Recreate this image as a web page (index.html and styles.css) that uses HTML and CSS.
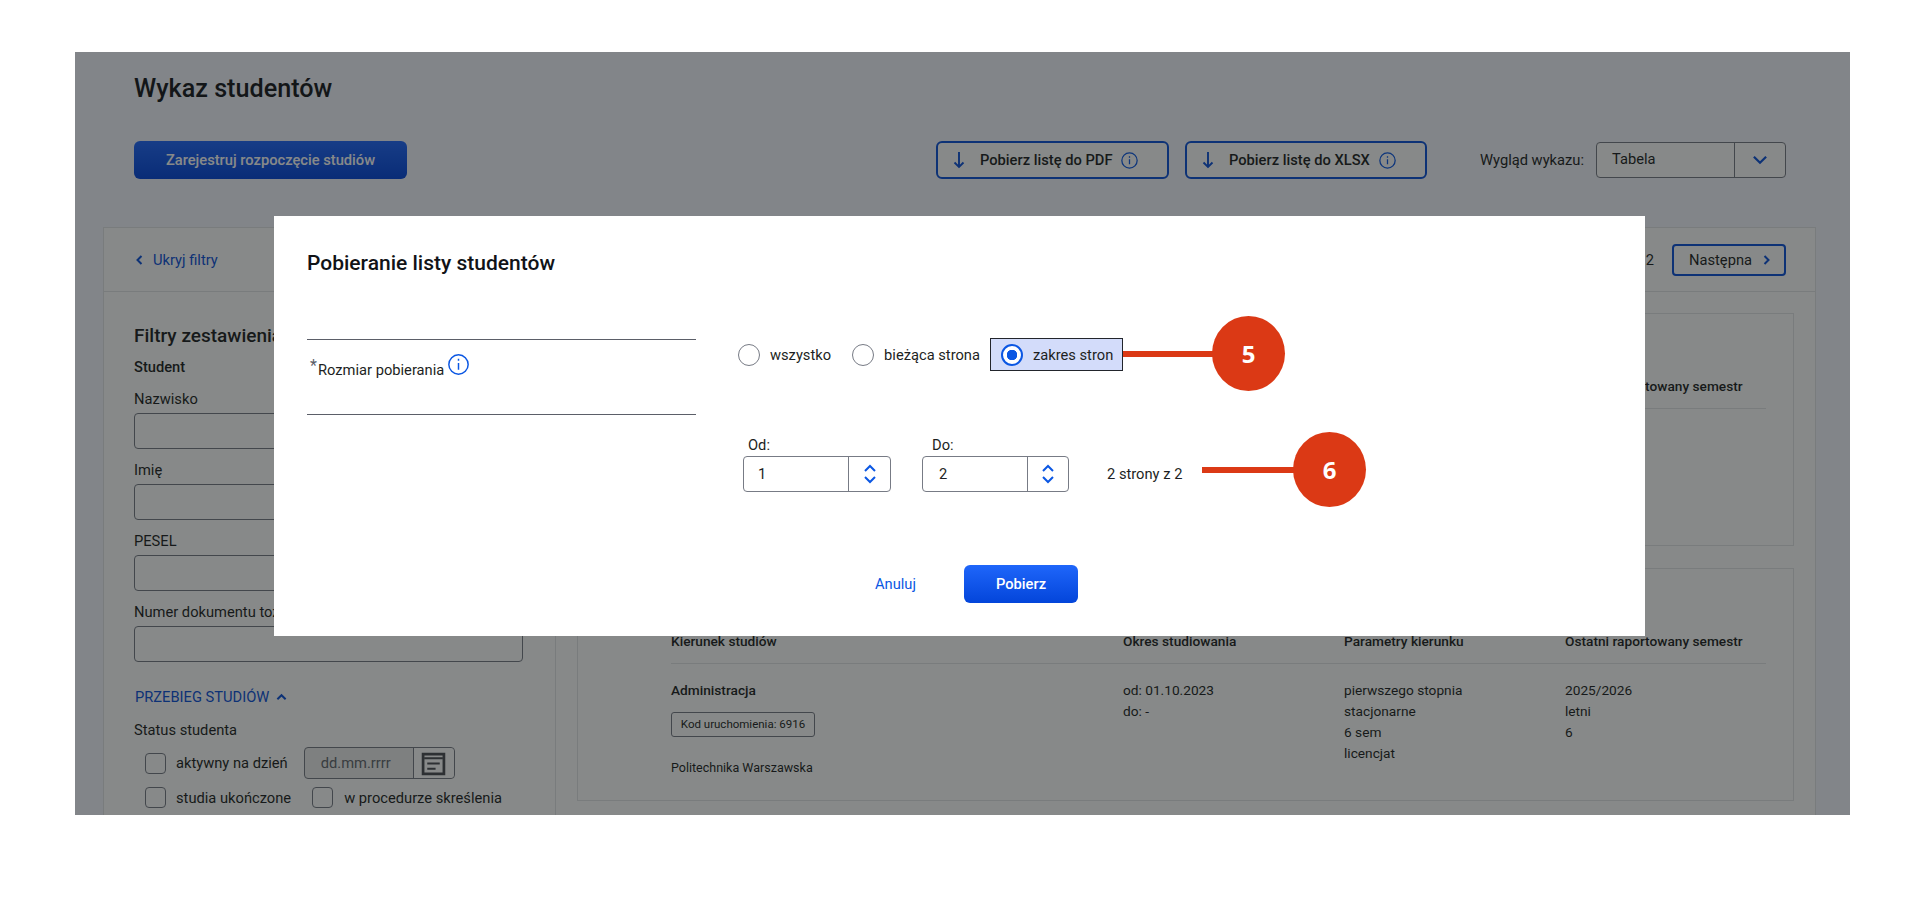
FILE: index.html
```html
<!DOCTYPE html>
<html lang="pl">
<head>
    <meta charset="UTF-8">
    <meta name="viewport" content="width=device-width, initial-scale=1.0">
    <title>Wykaz studentów</title>
    <link rel="stylesheet" href="styles.css">
</head>
<body>
    <div class="screen">
        <h1 class="page-title">Wykaz studentów</h1>

        <div class="toolbar">
            <button class="btn-primary btn-register">Zarejestruj rozpoczęcie studiów</button>
            <button class="btn-outline btn-pdf">
                <svg class="arrow-down" viewBox="0 0 14 18"><path d="M7 1v15M2.5 11.5 7 16l4.5-4.5"/></svg>
                <span>Pobierz listę do PDF</span>
                <svg class="info info-small" viewBox="0 0 20 20"><circle cx="10" cy="10" r="9"/><path d="M10 8.5v6M10 5v1.8"/></svg>
            </button>
            <button class="btn-outline btn-xlsx">
                <svg class="arrow-down" viewBox="0 0 14 18"><path d="M7 1v15M2.5 11.5 7 16l4.5-4.5"/></svg>
                <span>Pobierz listę do XLSX</span>
                <svg class="info info-small" viewBox="0 0 20 20"><circle cx="10" cy="10" r="9"/><path d="M10 8.5v6M10 5v1.8"/></svg>
            </button>
            <span class="view-label">Wygląd wykazu:</span>
            <div class="select">
                <span class="select-value">Tabela</span>
                <span class="select-arrow">
                    <svg viewBox="0 0 14 9"><path d="M1.5 1.5 7 7l5.5-5.5"/></svg>
                </span>
            </div>
        </div>

        <div class="panel">
            <div class="panel-head">
                <a class="hide-filters">
                    <svg viewBox="0 0 7 10"><path d="M5.5 1 1.5 5l4 4"/></svg>
                    Ukryj filtry
                </a>
                <div class="pager">
                    <span>2</span>
                    <button class="btn-next">
                        Następna
                        <svg viewBox="0 0 7 10"><path d="M1.5 1l4 4-4 4"/></svg>
                    </button>
                </div>
            </div>

            <div class="panel-body">
                <aside class="filters">
                    <h2>Filtry zestawienia</h2>
                    <h3>Student</h3>
                    <label class="field"><span>Nazwisko</span><input type="text"></label>
                    <label class="field"><span>Imię</span><input type="text"></label>
                    <label class="field"><span>PESEL</span><input type="text"></label>
                    <label class="field"><span>Numer dokumentu tożsamości</span><input type="text"></label>

                    <a class="section-toggle">
                        PRZEBIEG STUDIÓW
                        <svg viewBox="0 0 12 8"><path d="M1.5 6.5 6 2l4.5 4.5"/></svg>
                    </a>
                    <div class="status-label">Status studenta</div>
                    <div class="check-row check-row-date">
                        <span class="checkbox"></span>
                        <span>aktywny na dzień</span>
                        <div class="date-input">
                            <span class="date-value">dd.mm.rrrr</span>
                            <span class="date-btn">
                                <svg viewBox="0 0 24 24"><path class="cal-frame" d="M2 3h20v19H2z"/><path class="cal-lines" d="M3 7h18M6 12h12M6 17h8"/></svg>
                            </span>
                        </div>
                    </div>
                    <div class="check-row">
                        <span class="checkbox"></span>
                        <span>studia ukończone</span>
                        <span class="checkbox checkbox-second"></span>
                        <span>w procedurze skreślenia</span>
                    </div>
                </aside>

                <section class="cards">
                    <article class="card">
                        <div class="card-grid card-head">
                            <span>Kierunek studiów</span>
                            <span>Okres studiowania</span>
                            <span>Parametry kierunku</span>
                            <span>Ostatni raportowany semestr</span>
                        </div>
                    </article>
                    <article class="card">
                        <div class="card-grid card-head">
                            <span>Kierunek studiów</span>
                            <span>Okres studiowania</span>
                            <span>Parametry kierunku</span>
                            <span>Ostatni raportowany semestr</span>
                        </div>
                        <div class="card-grid card-row">
                            <div>
                                <strong>Administracja</strong>
                                <div class="badge">Kod uruchomienia: 6916</div>
                                <div class="school">Politechnika Warszawska</div>
                            </div>
                            <div>od: 01.10.2023<br>do: -</div>
                            <div>pierwszego stopnia<br>stacjonarne<br>6 sem<br>licencjat</div>
                            <div>2025/2026<br>letni<br>6</div>
                        </div>
                    </article>
                </section>
            </div>
        </div>

        <div class="overlay">
            <div class="modal">
                <h2 class="modal-title">Pobieranie listy studentów</h2>

                <div class="modal-form">
                    <div class="size-label">
                        <span class="star">*</span>
                        <span>Rozmiar pobierania</span>
                        <svg class="info info-big" viewBox="0 0 20 20"><circle cx="10" cy="10" r="9.2"/><path d="M10 8.5v6.5M10 4.6v1.9"/></svg>
                    </div>

                    <div class="size-options">
                        <div class="radios">
                            <span class="radio"></span>
                            <span class="radio-text">wszystko</span>
                            <span class="radio"></span>
                            <span class="radio-text">bieżąca strona</span>
                            <div class="radio-active">
                                <span class="radio radio-on"></span>
                                <span>zakres stron</span>
                            </div>
                        </div>

                        <div class="range">
                            <div class="spin-field spin-field-from">
                                <span class="spin-label">Od:</span>
                                <div class="spinner">
                                    <span class="spin-value">1</span>
                                    <span class="spin-btn">
                                        <svg viewBox="0 0 14 24"><path d="M2 9l5-5 5 5M2 15l5 5 5-5"/></svg>
                                    </span>
                                </div>
                            </div>
                            <div class="spin-field spin-field-to">
                                <span class="spin-label">Do:</span>
                                <div class="spinner">
                                    <span class="spin-value">2</span>
                                    <span class="spin-btn">
                                        <svg viewBox="0 0 14 24"><path d="M2 9l5-5 5 5M2 15l5 5 5-5"/></svg>
                                    </span>
                                </div>
                            </div>
                            <span class="range-info">2 strony z 2</span>
                        </div>
                    </div>
                </div>

                <div class="modal-actions">
                    <a class="cancel">Anuluj</a>
                    <button class="btn-primary btn-download">Pobierz</button>
                </div>

                <!-- Callouts drawn over the dialog -->
                <span class="callout-line callout-line-5"></span>
                <span class="callout-dot callout-dot-5">5</span>
                <span class="callout-line callout-line-6"></span>
                <span class="callout-dot callout-dot-6">6</span>
            </div>
        </div>
    </div>
</body>
</html>
```

FILE: styles.css
```css
* {
    box-sizing: border-box;
}

body {
    margin: 0;
    padding: 52px 68px 86px 75px;
    background-color: #fff;
    font-family: Roboto, "Liberation Sans", sans-serif;
    font-size: 14.7px;
    color: #1d1f23;
}

button {
    font-family: inherit;
    cursor: pointer;
}

/* The dimmed screenshot area */
.screen {
    position: relative;
    height: 763px;
    padding-top: 22px;
    overflow: hidden;
    background-color: #f4f6fe;
}

.page-title {
    margin: 0 0 37px 59px;
    font-size: 25.2px;
    line-height: 30px;
    font-weight: 500;
    color: #16181c;
}

/* Toolbar */
.toolbar {
    display: flex;
    align-items: center;
    height: 38px;
    padding: 0 64px 0 59px;
}

.btn-primary {
    height: 38px;
    border: 0;
    border-radius: 6px;
    background: linear-gradient(#1f66fa, #0345da);
    color: #fff;
    font-size: 14.7px;
    font-weight: 500;
}

.btn-register {
    width: 273px;
    margin-right: 529px;
}

.btn-outline {
    display: flex;
    align-items: center;
    height: 38px;
    padding: 0 0 0 14px;
    border: 2px solid #0b50d8;
    border-radius: 6px;
    background-color: #fff;
    color: #1d1f23;
    font-size: 14.7px;
    font-weight: 500;
    white-space: nowrap;
}

.btn-pdf {
    width: 233px;
    margin-right: 16px;
}

.btn-xlsx {
    width: 242px;
    margin-right: 53px;
}

.arrow-down {
    width: 14px;
    height: 18px;
    margin-right: 14px;
    fill: none;
    stroke: #0b50d8;
    stroke-width: 1.9;
}

.info {
    fill: none;
    stroke: #0b57e3;
}

.info-small {
    width: 17px;
    height: 17px;
    margin-left: 9px;
    stroke-width: 1.5;
}

.view-label {
    width: 116px;
    white-space: nowrap;
}

.select {
    display: flex;
    width: 190px;
    height: 36px;
    border: 1px solid #777b85;
    border-radius: 4px;
    background-color: #fff;
}

.select-value {
    flex: 1;
    padding-left: 15px;
    line-height: 32px;
}

.select-arrow {
    display: flex;
    align-items: center;
    justify-content: center;
    width: 51px;
    border-left: 1px solid #777b85;
}

.select-arrow svg {
    width: 16px;
    height: 10px;
    fill: none;
    stroke: #0b50d8;
    stroke-width: 2;
}

/* Main panel */
.panel {
    margin: 48px 34px 0 28px;
    border: 1px solid #e2e5e6;
    background-color: #fff;
}

.panel-head {
    display: flex;
    align-items: center;
    justify-content: space-between;
    height: 64px;
    padding: 0 29px 0 32px;
    border-bottom: 1px solid #e2e5e6;
}

.hide-filters {
    display: flex;
    align-items: center;
    gap: 10px;
    color: #0b50d8;
}

.hide-filters svg {
    width: 7px;
    height: 10px;
    fill: none;
    stroke: #0b50d8;
    stroke-width: 2;
}

.pager {
    display: flex;
    align-items: center;
    gap: 18px;
}

.btn-next {
    display: flex;
    align-items: center;
    justify-content: space-between;
    width: 114px;
    height: 32px;
    padding: 0 14px 0 15px;
    border: 2px solid #0b50d8;
    border-radius: 4px;
    background-color: #fff;
    color: #1d1f23;
    font-size: 14.7px;
}

.btn-next svg {
    width: 7px;
    height: 10px;
    fill: none;
    stroke: #0b50d8;
    stroke-width: 2;
}

.panel-body {
    display: flex;
}

/* Filter column */
.filters {
    width: 452px;
    flex: none;
    height: 560px;
    padding: 32px 0 0 30px;
    border-right: 1px solid #e2e5e6;
}

.filters h2 {
    margin: 0 0 9px;
    font-size: 19px;
    line-height: 24px;
    font-weight: 500;
    white-space: nowrap;
}

.filters h3 {
    margin: 0 0 12px;
    font-size: 14.7px;
    line-height: 20px;
    font-weight: 500;
}

.field {
    display: block;
    width: 389px;
    margin-bottom: 11px;
}

.field span {
    display: block;
    margin-bottom: 4px;
    line-height: 20px;
    white-space: nowrap;
}

.field input {
    display: block;
    width: 100%;
    height: 36px;
    border: 1px solid #777b85;
    border-radius: 4px;
}

.section-toggle {
    display: flex;
    align-items: center;
    gap: 7px;
    margin: 25px 0 0 1px;
    line-height: 20px;
    color: #0b50d8;
}

.section-toggle svg {
    width: 11px;
    height: 8px;
    fill: none;
    stroke: #0b50d8;
    stroke-width: 2.2;
}

.status-label {
    margin: 13px 0 7px;
    line-height: 20px;
}

.check-row {
    display: flex;
    align-items: center;
    height: 21px;
    margin-bottom: 8px;
    padding-left: 11px;
    white-space: nowrap;
}

.check-row-date {
    height: 32px;
}

.checkbox {
    width: 21px;
    height: 21px;
    margin-right: 10px;
    flex: none;
    border: 1px solid #777b85;
    border-radius: 4px;
    background-color: #fff;
}

.checkbox-second {
    margin-left: 21px;
    margin-right: 11px;
}

.date-input {
    display: flex;
    width: 151px;
    height: 32px;
    margin-left: 16px;
    border: 1px solid #777b85;
    border-radius: 4px;
    background-color: #eceded;
}

.date-value {
    width: 108px;
    padding-left: 16px;
    line-height: 30px;
    color: #62666c;
}

.date-btn {
    display: flex;
    align-items: center;
    justify-content: center;
    flex: 1;
    border-left: 1px solid #777b85;
    background-color: #fff;
    border-radius: 0 4px 4px 0;
}

.date-btn svg {
    width: 25px;
    height: 25px;
    fill: none;
    stroke: #4a4d53;
}

.cal-frame {
    stroke-width: 2.6;
}

.cal-lines {
    stroke-width: 2;
}

/* Study cards */
.cards {
    flex: 1;
    padding: 21px 21px 0;
}

.card {
    height: 233px;
    margin-bottom: 22px;
    padding: 62px 0 0 93px;
    border: 1px solid #e2e5e6;
    background-color: #fff;
    font-size: 13.7px;
}

.card-grid {
    display: grid;
    grid-template-columns: 452px 221px 221px 201px;
    width: 1095px;
}

.card-head {
    height: 33px;
    border-bottom: 1px solid #e2e5e6;
    font-weight: 500;
    line-height: 20px;
    white-space: nowrap;
}

.card-row {
    padding-top: 16px;
    line-height: 21px;
}

.card-row strong {
    display: block;
    font-weight: 500;
}

.badge {
    width: 144px;
    height: 25px;
    margin-top: 11px;
    border: 1px solid #777b85;
    border-radius: 3px;
    background-color: #fff;
    font-size: 11.5px;
    line-height: 22px;
    text-align: center;
    white-space: nowrap;
}

.school {
    margin-top: 20px;
    font-size: 12.5px;
}

/* Overlay and dialog */
.overlay {
    position: absolute;
    top: 0;
    left: 0;
    right: 0;
    bottom: 0;
    padding: 164px 0 0 199px;
    background-color: rgba(15, 20, 20, 0.5);
}

.modal {
    position: relative;
    width: 1371px;
    height: 420px;
    padding: 35px 33px 0;
    background-color: #fff;
    color: #1d1f23;
}

.modal-title {
    margin: 0 0 64px;
    font-size: 21px;
    line-height: 24px;
    font-weight: 500;
    color: #111317;
}

.modal-form {
    display: flex;
    align-items: flex-start;
}

.size-label {
    display: flex;
    align-items: flex-start;
    width: 389px;
    height: 76px;
    padding: 20px 0 0 3px;
    border-top: 1px solid #5b5e68;
    border-bottom: 1px solid #5b5e68;
    line-height: 20px;
}

.star {
    width: 8px;
    margin-top: -4px;
    font-size: 16px;
    color: #5b5e68;
}

.info-big {
    width: 21px;
    height: 21px;
    margin: -6px 0 0 4px;
    stroke-width: 1.4;
}

.size-options {
    margin: -1px 0 0 42px;
}

.radios {
    display: flex;
    align-items: center;
    height: 33px;
}

.radio {
    width: 22px;
    height: 22px;
    margin-right: 10px;
    flex: none;
    border: 1px solid #777b85;
    border-radius: 50%;
    background-color: #fff;
}

.radio-text {
    margin-right: 21px;
}

.radio-text:nth-child(4) {
    margin-right: 10px;
}

.radio-active {
    display: flex;
    align-items: center;
    width: 133px;
    height: 33px;
    padding-left: 10px;
    border: 1px solid #22252c;
    background-color: #d3dcfa;
    white-space: nowrap;
}

.radio-on {
    border: 2px solid #0b57e3;
    background: radial-gradient(circle, #0b57e3 0 5px, #fff 5.5px);
}

.range {
    display: flex;
    align-items: flex-end;
    margin: 64px 0 0 5px;
}

.spin-field {
    width: 147px;
    margin-right: 31px;
}

.spin-field-from {
    width: 148px;
}

.spin-label {
    display: block;
    padding-left: 5px;
    line-height: 20px;
    margin-bottom: 1px;
}

.spin-field-to .spin-label {
    padding-left: 10px;
}

.spinner {
    display: flex;
    height: 36px;
    border: 1px solid #777b85;
    border-radius: 4px;
}

.spin-value {
    width: 104px;
    padding-left: 16px;
    line-height: 34px;
}

.spin-field-from .spin-value {
    padding-left: 14px;
}

.spin-btn {
    display: flex;
    align-items: center;
    justify-content: center;
    flex: 1;
    border-left: 1px solid #777b85;
}

.spin-btn svg {
    width: 14px;
    height: 24px;
    fill: none;
    stroke: #0b57e3;
    stroke-width: 2;
}

.range-info {
    margin-left: 7px;
    line-height: 36px;
    white-space: nowrap;
}

.modal-actions {
    display: flex;
    align-items: center;
    margin: 73px 0 0 568px;
}

.cancel {
    width: 89px;
    color: #0b57e3;
}

.btn-download {
    width: 114px;
}

/* Red numbered callouts */
.callout-line {
    position: absolute;
    width: 95px;
    height: 6px;
    background-color: #db3915;
}

.callout-line-5 {
    left: 849px;
    top: 135px;
}

.callout-line-6 {
    left: 928px;
    top: 251px;
}

.callout-dot {
    position: absolute;
    width: 73px;
    height: 75px;
    border-radius: 50%;
    background-color: #db3915;
    color: #fff;
    font-family: "Open Sans", sans-serif;
    font-size: 24px;
    font-weight: 700;
    line-height: 75px;
    text-align: center;
}

.callout-dot-5 {
    left: 938px;
    top: 100px;
}

.callout-dot-6 {
    left: 1019px;
    top: 216px;
}
```
